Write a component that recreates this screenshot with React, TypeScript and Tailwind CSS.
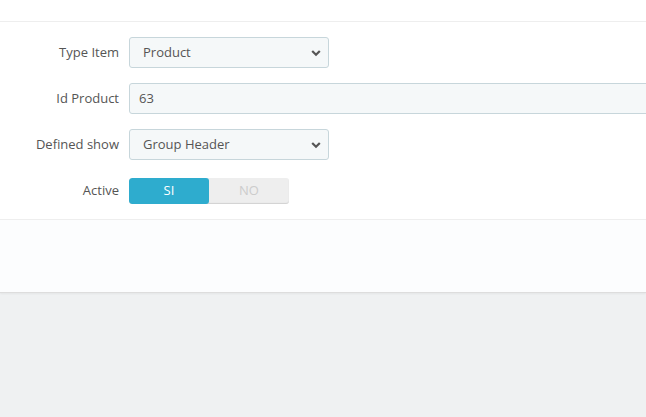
function Chevron() {
  return (
    <svg width="10" height="8" viewBox="0 0 10 8" className="text-[#555]">
      <path d="M1.2 2 L5 5.8 L8.8 2" fill="none" stroke="currentColor" strokeWidth="2.2" />
    </svg>
  );
}

function Label({ children }: { children: React.ReactNode }) {
  return (
    <div className="w-[129px] shrink-0 pr-[10px] text-right text-[13px] text-[#555]">{children}</div>
  );
}

function Select({ value }: { value: string }) {
  return (
    <div className="flex h-[31px] w-[200px] items-center justify-between rounded-[3px] border border-[#c7d6db] bg-[#f5f8f9] pl-[13px] pr-[7px] text-[13px] text-[#555]">
      <span>{value}</span>
      <Chevron />
    </div>
  );
}

export default function App() {
  return (
    <div
      className="h-[417px] w-[646px] overflow-hidden bg-[#eff1f2]"
      style={{ fontFamily: '"Open Sans", "Liberation Sans", sans-serif' }}
    >
      <div className="bg-white">
        <div className="h-[22px] border-b border-[#eeeeee]" />
        <div className="flex flex-col gap-[15px] pt-[15px] pb-[13px]">
          <div className="flex items-center">
            <Label>Type Item</Label>
            <Select value="Product" />
          </div>
          <div className="flex items-center">
            <Label>Id Product</Label>
            <div className="flex h-[31px] w-[540px] shrink-0 items-center rounded-[3px] border border-[#c7d6db] bg-[#f5f8f9] pl-[9px] text-[13px] text-[#555]">
              63
            </div>
          </div>
          <div className="flex items-center">
            <Label>Defined show</Label>
            <Select value="Group Header" />
          </div>
          <div className="flex h-[31px] items-center">
            <Label>Active</Label>
            <div className="flex h-[26px] w-[160px] overflow-hidden rounded-[3px] bg-[#eeeeee] shadow-[inset_0_-1px_1px_rgba(0,0,0,0.12)] text-[13px]">
              <div className="flex w-[80px] items-center justify-center rounded-[3px] bg-[#2eacce] text-white">SI</div>
              <div className="flex flex-1 items-center justify-center text-[#cccccc]">NO</div>
            </div>
          </div>
        </div>
        <div className="h-[74px] border-t border-[#eeeeee] border-b border-b-[#dddddd] bg-[#fcfdfe] shadow-[0_1px_2px_rgba(0,0,0,0.05)]" />
      </div>
    </div>
  );
}
